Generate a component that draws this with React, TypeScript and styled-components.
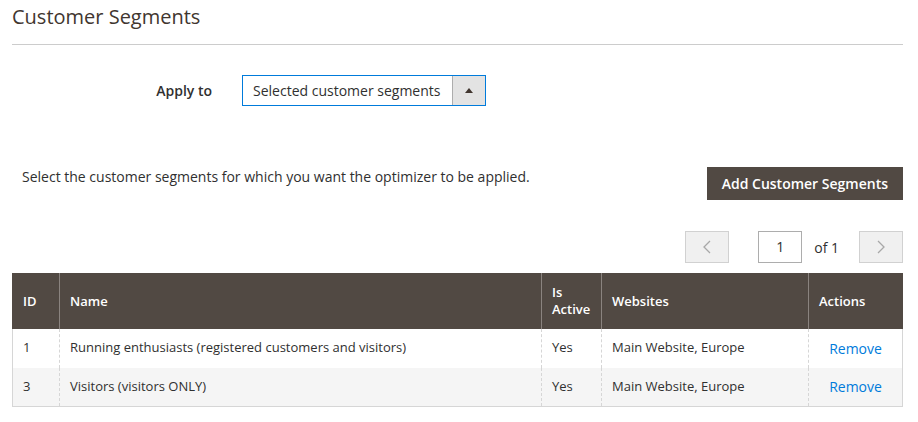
import * as React from 'react';
import styled, { createGlobalStyle } from 'styled-components';

const GlobalStyle = createGlobalStyle`
  body {
    margin: 0;
    background: #fff;
    font-family: "Open Sans", "Liberation Sans", sans-serif;
    color: #303030;
  }
`;

const Page = styled.div`
  padding: 0 15px 0 12px;
`;

const Title = styled.h2`
  margin: 0;
  padding: 4px 0 15px;
  font-size: 20px;
  font-weight: 400;
  line-height: 25px;
  color: #41362f;
  border-bottom: 1px solid #cccccc;
`;

const FieldRow = styled.div`
  display: flex;
  align-items: center;
  gap: 30px;
  margin-top: 30px;
`;

const Label = styled.label`
  width: 200px;
  text-align: right;
  font-size: 14px;
  font-weight: 600;
  color: #303030;
`;

const Select = styled.div`
  display: flex;
  width: 244px;
  height: 31px;
  box-sizing: border-box;
  border: 1px solid #007bdb;
`;

const SelectValue = styled.div`
  flex: 1;
  padding: 0 10px;
  font-size: 14px;
  line-height: 29px;
  color: #303030;
`;

const SelectArrow = styled.div`
  width: 32px;
  display: flex;
  align-items: center;
  justify-content: center;
  background: #e3e3e3;
  border-left: 1px solid #adadad;
`;

const Triangle = styled.span`
  width: 0;
  height: 0;
  border-left: 4px solid transparent;
  border-right: 4px solid transparent;
  border-bottom: 5px solid #41362f;
`;

const IntroRow = styled.div`
  display: flex;
  justify-content: space-between;
  align-items: flex-start;
  margin-top: 61px;
  padding-left: 10px;
`;

const Intro = styled.p`
  margin: 0;
  font-size: 14px;
  line-height: 20px;
`;

const PrimaryButton = styled.button`
  height: 33px;
  padding: 0 15px;
  border: none;
  background: #514943;
  color: #fff;
  font-family: inherit;
  font-size: 14px;
  font-weight: 600;
  cursor: pointer;
`;

const Pager = styled.div`
  display: flex;
  justify-content: flex-end;
  align-items: center;
  margin-top: 31px;
`;

const PageButton = styled.button`
  width: 44px;
  height: 32px;
  padding: 0;
  display: flex;
  align-items: center;
  justify-content: center;
  background: #f0f0f0;
  border: 1px solid #d1d1d1;
`;

const PageInput = styled.div`
  width: 44px;
  height: 32px;
  box-sizing: border-box;
  margin-left: 29px;
  border: 1px solid #adadad;
  text-align: center;
  font-size: 14px;
  line-height: 30px;
`;

const PageTotal = styled.span`
  margin: 0 20px 0 12px;
  font-size: 14px;
`;

const Grid = styled.table`
  width: 100%;
  margin-top: 10px;
  border-collapse: collapse;
  border: 1px solid #d6d6d6;
`;

const Th = styled.th<{ $w?: number }>`
  width: ${p => (p.$w ? `${p.$w}px` : 'auto')};
  box-sizing: border-box;
  height: 55px;
  padding: 4px 10px;
  background: #514943;
  color: #fff;
  text-align: left;
  font-size: 13px;
  font-weight: 600;
  line-height: 17px;
  border: 1px solid #8a837f;
  border-top-color: #514943;
  border-bottom: none;
  &:first-child { border-left-color: #514943; }
  &:last-child { border-right-color: #514943; }
`;

const Row = styled.tr<{ $alt?: boolean }>`
  background: ${p => (p.$alt ? '#f5f5f5' : '#fff')};
`;

const Td = styled.td<{ $center?: boolean }>`
  height: 39px;
  box-sizing: border-box;
  padding: 0 10px 2px;
  font-size: 13px;
  color: #303030;
  text-align: ${p => (p.$center ? 'center' : 'left')};
  border-left: 1px dashed #d6d6d6;
  &:first-child { border-left: none; }
`;

const Link = styled.a`
  display: inline-block;
  margin-top: 2px;
  font-size: 14px;
  color: #007bdb;
  text-decoration: none;
`;

const Chevron = ({ dir }: { dir: 'left' | 'right' }) => (
  <svg width="8" height="14" viewBox="0 0 8 14" fill="none" stroke="#a8a8a8" strokeWidth="1.3">
    {dir === 'left' ? <path d="M7 1 1 7l6 6" /> : <path d="M1 1l6 6-6 6" />}
  </svg>
);

const segments = [
  { id: 1, name: 'Running enthusiasts (registered customers and visitors)', active: 'Yes', sites: 'Main Website, Europe' },
  { id: 3, name: 'Visitors (visitors ONLY)', active: 'Yes', sites: 'Main Website, Europe' },
];

export default function App() {
  return (
    <Page>
      <GlobalStyle />
      <Title>Customer Segments</Title>
      <FieldRow>
        <Label>Apply to</Label>
        <Select>
          <SelectValue>Selected customer segments</SelectValue>
          <SelectArrow><Triangle /></SelectArrow>
        </Select>
      </FieldRow>
      <IntroRow>
        <Intro>Select the customer segments for which you want the optimizer to be applied.</Intro>
        <PrimaryButton>Add Customer Segments</PrimaryButton>
      </IntroRow>
      <Pager>
        <PageButton><Chevron dir="left" /></PageButton>
        <PageInput>1</PageInput>
        <PageTotal>of 1</PageTotal>
        <PageButton><Chevron dir="right" /></PageButton>
      </Pager>
      <Grid>
        <thead>
          <tr>
            <Th $w={47}>ID</Th>
            <Th>Name</Th>
            <Th $w={60}>Is Active</Th>
            <Th $w={207}>Websites</Th>
            <Th $w={94}>Actions</Th>
          </tr>
        </thead>
        <tbody>
          {segments.map((s, i) => (
            <Row key={s.id} $alt={i % 2 === 1}>
              <Td>{s.id}</Td>
              <Td>{s.name}</Td>
              <Td>{s.active}</Td>
              <Td>{s.sites}</Td>
              <Td $center><Link href="#">Remove</Link></Td>
            </Row>
          ))}
        </tbody>
      </Grid>
    </Page>
  );
}
